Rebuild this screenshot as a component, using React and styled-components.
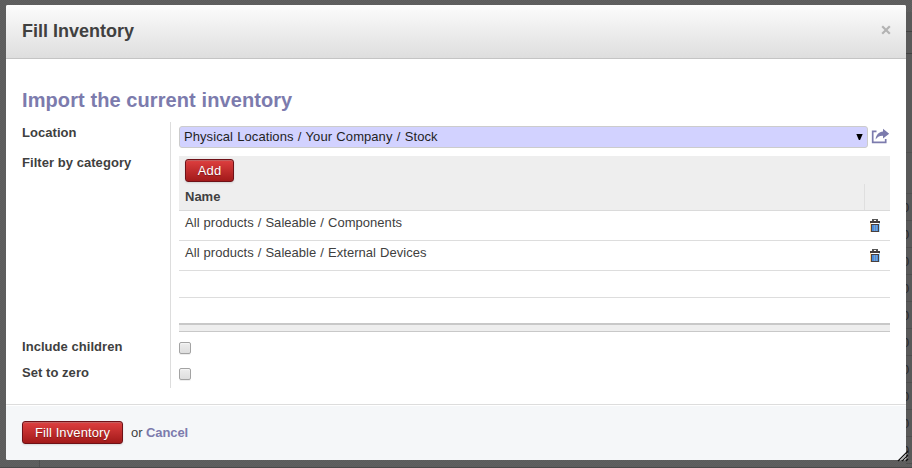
import React from "react";
import styled, { createGlobalStyle } from "styled-components";

const GlobalStyle = createGlobalStyle`
  * { box-sizing: border-box; }
  body {
    margin: 0;
    font: 13px/18px "Liberation Sans", Arial, sans-serif;
    color: #404040;
  }
`;

const Backdrop = styled.div`
  position: relative;
  width: 912px;
  height: 468px;
  padding: 5px 6px 8px;
  overflow: hidden;
  background: repeating-conic-gradient(#5b5b5b 0 25%, #606060 0 50%) 0 0 / 2px 2px;
  border-bottom: 1px solid #4a4a4a;
  &::before {
    content: "";
    position: absolute;
    left: 0;
    bottom: 0;
    width: 39px;
    height: 7px;
    border-right: 1px solid #505050;
  }
`;

const PageEdge = styled.div`
  position: absolute;
  top: 12px;
  right: 0;
  width: 6px;
  height: 448px;
  background: #595959;
`;

const EdgeLine = styled.div`
  height: ${(p) => p.$height}px;
  border-bottom: 1px solid ${(p) => p.$color || "#505050"};
`;

const EdgeRow = styled.div`
  height: 27px;
  border-bottom: 1px solid #4e4e4e;
  line-height: 27px;
  color: #292929;
  text-indent: -4px;
`;

const Dialog = styled.div`
  position: relative;
  display: flex;
  flex-direction: column;
  height: 455px;
  background: #fff;
  border-radius: 2px;
  overflow: hidden;
`;

const Header = styled.header`
  display: flex;
  align-items: center;
  justify-content: space-between;
  height: 54px;
  padding: 0 15px 2px 16px;
  border-bottom: 1px solid #c4c4c4;
  background: linear-gradient(#fcfcfc, #dedede);
`;

const Title = styled.h1`
  margin: 0;
  font-size: 18px;
  line-height: 24px;
`;

const CloseButton = styled.button`
  display: flex;
  margin-bottom: 2px;
  padding: 0;
  border: 0;
  background: none;
`;

const Body = styled.main`
  flex: 1;
  padding: 29px 16px 0;
`;

const Heading = styled.h2`
  margin: 0 0 10px;
  font-size: 20px;
  line-height: 24px;
  letter-spacing: 0.09px;
  color: #7c7bad;
`;

const Form = styled.div`
  display: grid;
  grid-template-columns: 149px 1fr;
  grid-template-rows: 30px 184px 26px 26px;
`;

const Label = styled.label`
  padding-top: 2px;
  border-right: 1px solid #ddd;
  font-weight: bold;
  letter-spacing: 0.05px;
`;

const Field = styled.div`
  display: flex;
  align-items: flex-start;
  padding: ${(p) => p.$top}px 0 0 8px;
`;

const Select = styled.div`
  display: flex;
  align-items: center;
  justify-content: space-between;
  width: 689px;
  height: 22px;
  padding: 0 4px;
  border: 1px solid #ccc;
  border-radius: 3px;
  background: #d2d2ff;
  color: #1f1f1f;
  letter-spacing: 0.07px;
  word-spacing: 0.6px;
`;

const OpenIcon = styled.svg`
  margin: 2px 0 0 3px;
`;

const List = styled.div`
  width: 711px;
`;

const Toolbar = styled.div`
  height: 28px;
  padding: 3px 6px 0;
  background: #eee;
`;

const Columns = styled.div`
  display: grid;
  grid-template-columns: 686px 25px;
  height: 27px;
  border-bottom: 1px solid #dadada;
  background: #eee;
  font-weight: bold;
`;

const ColumnName = styled.div`
  padding: 4px 6px;
  border-right: 1px solid #dfdfdf;
`;

const Row = styled.div`
  display: flex;
  justify-content: space-between;
  height: ${(p) => p.$height}px;
  padding: 3px 10px 0 6px;
  border-bottom: ${(p) => (p.$last ? "0" : "1px solid #ddd")};
  word-spacing: 0.35px;
  letter-spacing: 0.04px;
`;

const TrashIcon = styled.svg`
  margin-top: 5px;
`;

const ListFooter = styled.div`
  height: 9px;
  border-top: 2px solid #c8c8c8;
  border-bottom: 1px solid #c8c8c8;
  background: #eee;
`;

const Button = styled.button`
  width: ${(p) => p.$width}px;
  height: 23px;
  padding: 0;
  border: 1px solid #6f1117;
  border-radius: 3px;
  background: linear-gradient(#df3f3f, #a21a1a);
  box-shadow: 0 1px 2px rgba(0, 0, 0, 0.12), inset 0 1px 1px rgba(155, 155, 155, 0.4);
  color: #fff;
  font: inherit;
  line-height: 20px;
  letter-spacing: 0.11px;
  text-shadow: 0 1px 1px rgba(0, 0, 0, 0.3);
`;

const Checkbox = styled.input`
  appearance: none;
  width: 12px;
  height: 12px;
  margin: 0;
  border: 1px solid #a3a3a3;
  border-radius: 2px;
  background: linear-gradient(#ededed, #dedede);
  box-shadow: 0 1px 0 #eee, inset 0 1px 1px #f6f6f6;
`;

const Footer = styled.footer`
  display: flex;
  height: 56px;
  padding: 16px 16px 0;
  border-top: 1px solid #ddd;
  background: #f5f7f9;
  box-shadow: inset 0 1px 0 #fff;
  line-height: 23px;
`;

const Or = styled.span`
  margin: 0 3.5px 0 8px;
`;

const Cancel = styled.a`
  font-weight: bold;
  letter-spacing: -0.1px;
  color: #7c7bad;
`;

const ResizeGrip = styled.svg`
  position: absolute;
  right: 3px;
  bottom: 5px;
`;

function Trash() {
  return (
    <TrashIcon width="10" height="13" viewBox="0 0 10 13" shapeRendering="crispEdges">
      <path d="M2 0h6v2H2z" fill="#555" />
      <path d="M4 1h2v1H4z" fill="#fff" />
      <path d="M0 2h10v2H0z" fill="#443c3b" />
      <path d="M1 5h8v8H1z" fill="#4a4040" />
      <path d="M2 6h6v6H2z" fill="#4b8cdb" />
      <path d="M4 6h1v6H4zM6 6h1v6H6z" fill="#7ba4cf" />
      <path d="M0 4h1v9H0z" fill="#ffd59a" />
      <path d="M9 4h1v9H9z" fill="#a9dcff" />
    </TrashIcon>
  );
}

const categories = [
  "All products / Saleable / Components",
  "All products / Saleable / External Devices",
];

const edgeRows = Array.from({ length: 10 }, (_, i) => i);

export default function App() {
  return (
    <>
      <GlobalStyle />
      <Backdrop>
        <PageEdge>
          <EdgeLine $height={20} $color="#414141" />
          <EdgeLine $height={22} $color="#414141" />
          <EdgeLine $height={99} />
          <EdgeLine $height={41} />
          {edgeRows.map((i) => (
            <EdgeRow key={i}>0</EdgeRow>
          ))}
        </PageEdge>
        <Dialog>
          <Header>
            <Title>Fill Inventory</Title>
            <CloseButton aria-label="Close">
              <svg width="10" height="10" viewBox="0 0 10 10">
                <path d="M1.2 1.2l7.6 7.6m0-7.6l-7.6 7.6" stroke="#b3b3b3" strokeWidth="2.2" />
              </svg>
            </CloseButton>
          </Header>
          <Body>
            <Heading>Import the current inventory</Heading>
            <Form>
              <Label>Location</Label>
              <Field $top={4}>
                <Select>
                  Physical Locations / Your Company / Stock
                  <svg width="7" height="6" viewBox="0 0 7 6">
                    <path d="M0.3 0h6.4L4.1 6H2.9z" fill="#000" />
                  </svg>
                </Select>
                <OpenIcon width="19" height="16" viewBox="0 0 19 16">
                  <path d="M5.5 3.4H1.7v11h13V11" fill="none" stroke="#7c7bad" strokeWidth="1.7" />
                  <path d="M12 .8l6.2 5-6.2 4.7V7.9C9 7.7 7 8.6 4.6 11.4 5 6.8 8 4 12 3.6z" fill="#7c7bad" />
                </OpenIcon>
              </Field>
              <Label>Filter by category</Label>
              <Field $top={4}>
                <List>
                  <Toolbar>
                    <Button $width={49}>Add</Button>
                  </Toolbar>
                  <Columns>
                    <ColumnName>Name</ColumnName>
                  </Columns>
                  {categories.map((name) => (
                    <Row key={name} $height={30}>
                      {name}
                      <Trash />
                    </Row>
                  ))}
                  <Row $height={27} />
                  <Row $height={25} $last />
                  <ListFooter />
                </List>
              </Field>
              <Label>Include children</Label>
              <Field $top={6}>
                <Checkbox type="checkbox" />
              </Field>
              <Label>Set to zero</Label>
              <Field $top={6}>
                <Checkbox type="checkbox" />
              </Field>
            </Form>
          </Body>
          <Footer>
            <Button $width={101}>Fill Inventory</Button>
            <Or>or</Or>
            <Cancel>Cancel</Cancel>
          </Footer>
        </Dialog>
        <ResizeGrip width="12" height="12" viewBox="0 0 12 12">
          <path d="M1 11L11 1M5 11l6-6M9 11l2-2" stroke="#111" strokeWidth="1.1" />
          <path d="M3 11l8-8M7 11l4-4" stroke="#999" strokeWidth="0.7" />
        </ResizeGrip>
      </Backdrop>
    </>
  );
}
